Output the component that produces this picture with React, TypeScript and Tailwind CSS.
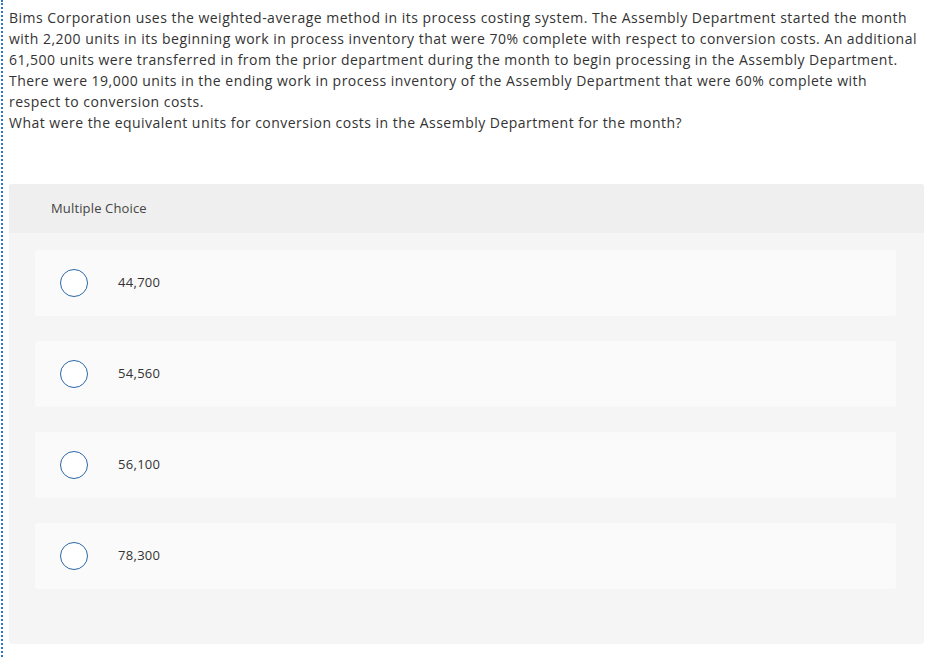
const questionLines = [
  "Bims Corporation uses the weighted-average method in its process costing system. The Assembly Department started the month",
  "with 2,200 units in its beginning work in process inventory that were 70% complete with respect to conversion costs. An additional",
  "61,500 units were transferred in from the prior department during the month to begin processing in the Assembly Department.",
  "There were 19,000 units in the ending work in process inventory of the Assembly Department that were 60% complete with",
  "respect to conversion costs.",
];

const choices = ["44,700", "54,560", "56,100", "78,300"];

export default function App() {
  return (
    <div
      className="min-h-screen bg-white"
      style={{ fontFamily: '"Open Sans", "Liberation Sans", sans-serif' }}
    >
      <div className="ml-px min-h-screen border-l-2 border-dotted border-[#3473bd] pl-[6px] pt-[7px]">
        <div className="text-[14px] leading-[21px] tracking-[0.48px] text-[#333]">
          {questionLines.map((line) => (
            <div key={line} className="whitespace-nowrap">
              {line}
            </div>
          ))}
          <div className="whitespace-nowrap">
            What were the equivalent units for conversion costs in the Assembly Department for the month?
          </div>
        </div>

        <div className="mt-[51px] w-[915px] overflow-hidden rounded-[3px] bg-[#f5f5f5]">
          <div className="flex h-[49px] items-center bg-[#efefef] pl-[42px] text-[13px] tracking-[0.15px] text-[#444]">
            Multiple Choice
          </div>
          <div className="flex flex-col gap-[25px] pb-[55px] pl-[26px] pr-[28px] pt-[17px]">
            {choices.map((choice) => (
              <div
                key={choice}
                className="flex h-[66px] items-center rounded-[3px] bg-[#fafafa] pl-[25px]"
              >
                <span className="h-[28px] w-[28px] shrink-0 rounded-full border-[1.5px] border-[#2c67a6] bg-white" />
                <span className="ml-[30px] text-[13px] tracking-[0.3px] text-[#333]">{choice}</span>
              </div>
            ))}
          </div>
        </div>
      </div>
    </div>
  );
}
